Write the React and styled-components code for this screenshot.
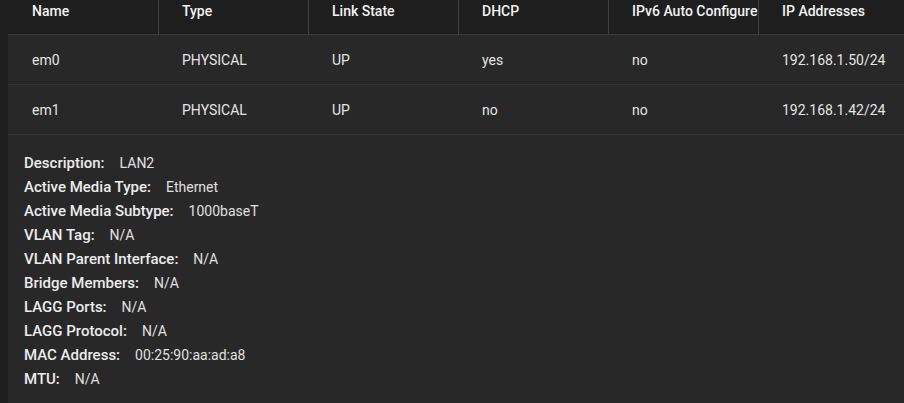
import React from 'react';
import styled, { createGlobalStyle } from 'styled-components';

const GlobalStyle = createGlobalStyle`
  html, body {
    margin: 0;
    padding: 0;
    background: #1e1e1e;
    font-family: Roboto, "Liberation Sans", sans-serif;
    overflow: hidden;
  }
`

const Page = styled.div`
  padding-left: 8px;
  height: 403px;
  background: #1e1e1e;
`

const Table = styled.div`
  background: #282828;
  height: 100%;
`

const HeaderRow = styled.div`
  display: grid;
  grid-template-columns: repeat(6, 150px);
  height: 34px;
  background: #1e1e1e;
  border-bottom: 1px solid #383838;
`

const HeaderCell = styled.div`
  padding: 3px 0 0 24px;
  color: #f2f2f2;
  font-size: 14px;
  font-weight: 500;
  white-space: nowrap;
  overflow: hidden;
  border-left: ${p => (p.$first ? 'none' : '1px solid #404040')};
  padding-left: ${p => (p.$first ? '24px' : '23px')};
`

const Row = styled.div`
  display: grid;
  grid-template-columns: repeat(6, 150px);
  height: 49px;
  align-items: center;
  border-bottom: 1px solid #333333;
`

const Cell = styled.div`
  padding-left: 24px;
  color: #e4e4e4;
  font-size: 14px;
  white-space: nowrap;
`

const Details = styled.div`
  padding: 16px 16px 0;
`

const DetailLine = styled.div`
  display: flex;
  gap: 15px;
  height: 24px;
  align-items: center;
`

const Label = styled.span`
  color: #ececec;
  font-size: 15px;
  font-weight: 500;
`

const Value = styled.span`
  color: #e0e0e0;
  font-size: 14px;
`

const columns = ['Name', 'Type', 'Link State', 'DHCP', 'IPv6 Auto Configure', 'IP Addresses'];

const rows = [
  ['em0', 'PHYSICAL', 'UP', 'yes', 'no', '192.168.1.50/24'],
  ['em1', 'PHYSICAL', 'UP', 'no', 'no', '192.168.1.42/24'],
];

const details = [
  ['Description:', 'LAN2'],
  ['Active Media Type:', 'Ethernet'],
  ['Active Media Subtype:', '1000baseT'],
  ['VLAN Tag:', 'N/A'],
  ['VLAN Parent Interface:', 'N/A'],
  ['Bridge Members:', 'N/A'],
  ['LAGG Ports:', 'N/A'],
  ['LAGG Protocol:', 'N/A'],
  ['MAC Address:', '00:25:90:aa:ad:a8'],
  ['MTU:', 'N/A'],
];

export default function App() {
  return (
    <>
      <GlobalStyle />
      <Page>
        <Table>
          <HeaderRow>
            {columns.map((c, i) => (
              <HeaderCell key={c} $first={i === 0}>{c}</HeaderCell>
            ))}
          </HeaderRow>
          {rows.map(r => (
            <Row key={r[0]}>
              {r.map((v, i) => <Cell key={i}>{v}</Cell>)}
            </Row>
          ))}
          <Details>
            {details.map(([l, v]) => (
              <DetailLine key={l}>
                <Label>{l}</Label>
                <Value>{v}</Value>
              </DetailLine>
            ))}
          </Details>
        </Table>
      </Page>
    </>
  )
}
